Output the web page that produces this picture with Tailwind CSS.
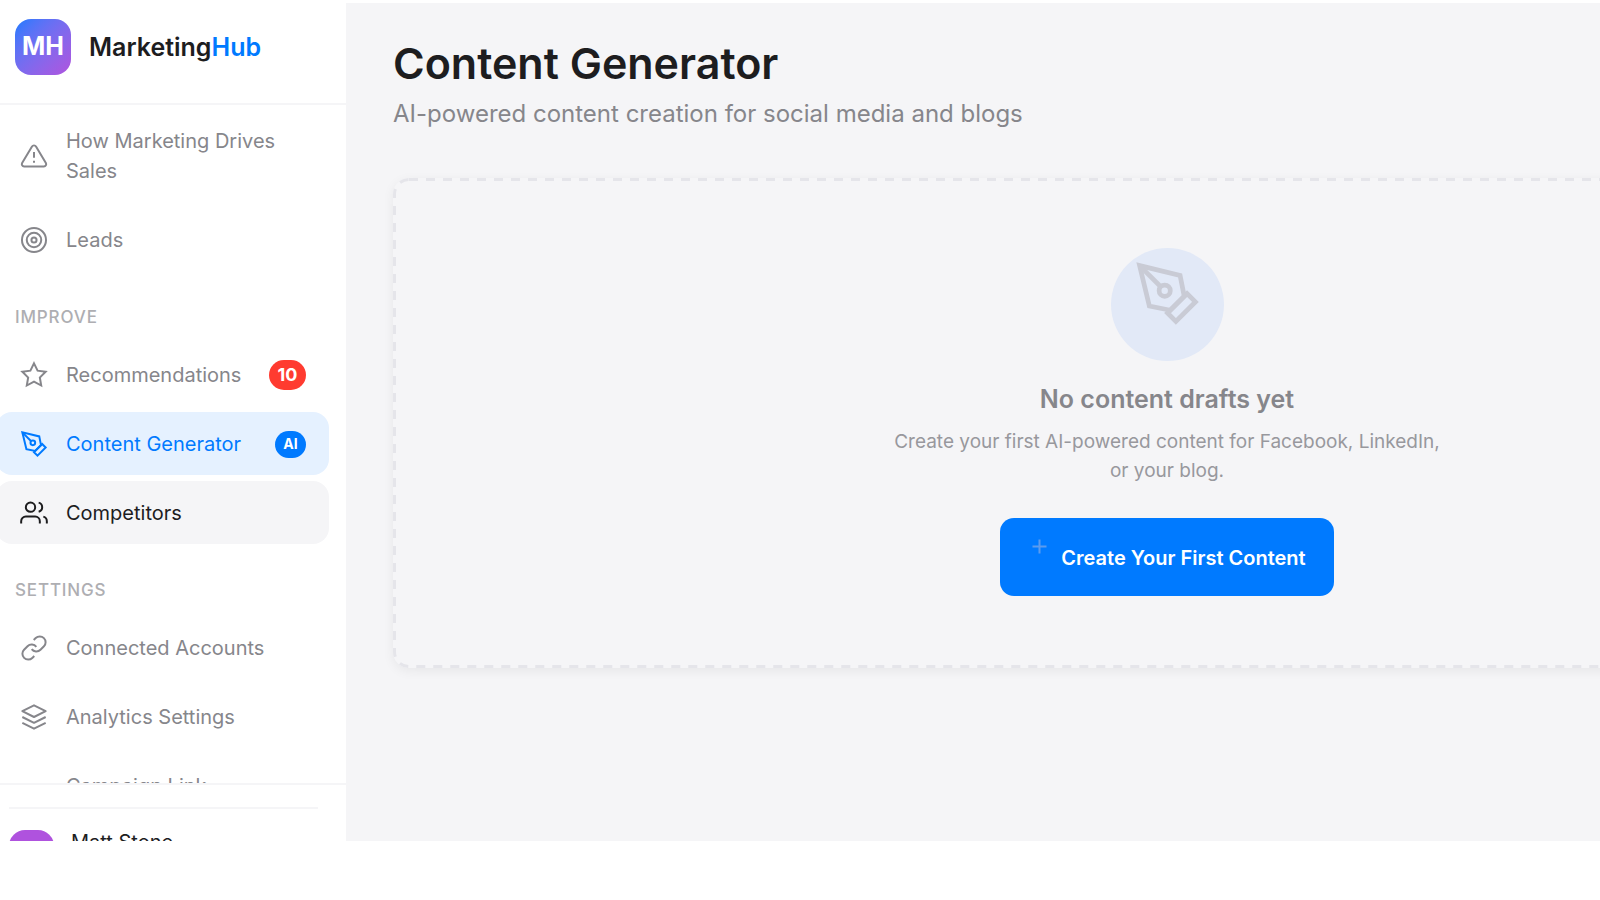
<!DOCTYPE html>
<html lang="en">
<head>
    <meta charset="UTF-8">
    <meta name="viewport" content="width=device-width, initial-scale=1.0">
    <title>MarketingHub - Content Generator</title>
    <script src="https://cdn.jsdelivr.net/npm/@tailwindcss/browser@4"></script>
</head>
<body class="bg-white font-['Inter',sans-serif] text-[#1d1d1f] antialiased overflow-hidden">

<div class="flex h-screen pt-[3px] pb-[59px]">

    <!-- Sidebar -->
    <aside class="flex w-[346px] shrink-0 flex-col overflow-hidden bg-white">

        <!-- Logo -->
        <div class="flex items-start gap-[18px] border-b-2 border-[#f5f5f7] px-[15px] pt-4 pb-7">
            <div class="flex size-14 items-center justify-center rounded-2xl bg-linear-to-br from-[#007aff] to-[#af52de] text-[25px] font-bold text-white">MH</div>
            <div class="text-[25px] leading-[56px] font-semibold">Marketing<span class="text-[#007aff]">Hub</span></div>
        </div>

        <!-- Navigation -->
        <nav class="-ml-1 min-h-0 flex-1 overflow-hidden pt-1 pr-[17px] text-[20px] leading-[30px] text-[#86868b]">
            <div class="flex flex-col gap-1.5">
                <a href="#" class="flex items-center gap-[18px] rounded-2xl pt-[17px] pb-4 pr-[23px] pl-6">
                    <svg class="size-7 shrink-0" viewBox="0 0 24 24" fill="none" stroke="currentColor" stroke-width="1.7"><path d="M10.29 3.86 1.82 18a2 2 0 0 0 1.71 3h16.94a2 2 0 0 0 1.71-3L13.71 3.86a2 2 0 0 0-3.42 0z"/><path d="M12 8.5v5M12 16v1.7"/></svg>
                    <span>How Marketing Drives Sales</span>
                </a>
                <a href="#" class="flex items-center gap-[18px] rounded-2xl pt-[17px] pb-4 pr-[23px] pl-6">
                    <svg class="size-7 shrink-0" viewBox="0 0 24 24" fill="none" stroke="currentColor" stroke-width="1.7"><circle cx="12" cy="12" r="10.3"/><circle cx="12" cy="12" r="6.2"/><circle cx="12" cy="12" r="2.2"/></svg>
                    <span>Leads</span>
                </a>
            </div>

            <h2 class="mt-[34px] mb-[14px] pl-[19px] text-[17px] leading-6 font-medium tracking-wider text-[#aeaeb2]">IMPROVE</h2>
            <div class="flex flex-col gap-1.5">
                <a href="#" class="flex items-center gap-[18px] rounded-2xl pt-[17px] pb-4 pr-[23px] pl-6">
                    <svg class="size-7 shrink-0" viewBox="0 0 24 24" fill="none" stroke="currentColor" stroke-width="1.7"><path d="m12 2 3.09 6.26L22 9.27l-5 4.87 1.18 6.88L12 17.77l-6.18 3.25L7 14.14 2 9.27l6.91-1.01z"/></svg>
                    <span class="flex-1">Recommendations</span>
                    <span class="flex h-[30px] w-[37px] items-center justify-center rounded-full bg-[#ff3b30] text-[18px] font-bold text-white">10</span>
                </a>
                <a href="#" class="flex items-center gap-[18px] rounded-2xl bg-[#e5f1ff] pt-[17px] pb-4 pr-[23px] pl-6 text-[#007aff]">
                    <svg class="size-7 shrink-0" viewBox="0 0 24 24" fill="none" stroke="currentColor" stroke-width="1.7"><path d="m12 19 7-7 3 3-7 7z"/><path d="m18 13-1.5-7.5L2 2l3.5 14.5L13 18z"/><path d="m2 2 7.59 7.59"/><circle cx="11" cy="11" r="2"/></svg>
                    <span class="flex-1">Content Generator</span>
                    <span class="flex h-[27px] w-[31px] items-center justify-center rounded-full bg-[#007aff] text-[14px] font-bold text-white">AI</span>
                </a>
                <a href="#" class="flex items-center gap-[18px] rounded-2xl bg-[#f5f5f7] pt-[17px] pb-4 pr-[23px] pl-6 text-[#1d1d1f]">
                    <svg class="size-7 shrink-0" viewBox="0 0 24 24" fill="none" stroke="currentColor" stroke-width="1.7"><path d="M17 21v-2a4 4 0 0 0-4-4H5a4 4 0 0 0-4 4v2"/><circle cx="9" cy="7" r="4"/><path d="M23 21v-2a4 4 0 0 0-3-3.87M16 3.13a4 4 0 0 1 0 7.75"/></svg>
                    <span>Competitors</span>
                </a>
            </div>

            <h2 class="mt-[34px] mb-[14px] pl-[19px] text-[17px] leading-6 font-medium tracking-wider text-[#aeaeb2]">SETTINGS</h2>
            <div class="flex flex-col gap-1.5">
                <a href="#" class="flex items-center gap-[18px] rounded-2xl pt-[17px] pb-4 pr-[23px] pl-6">
                    <svg class="size-7 shrink-0" viewBox="0 0 24 24" fill="none" stroke="currentColor" stroke-width="1.7"><path d="M10 13a5 5 0 0 0 7.54.54l3-3a5 5 0 0 0-7.07-7.07l-1.72 1.71"/><path d="M14 11a5 5 0 0 0-7.54-.54l-3 3a5 5 0 0 0 7.07 7.07l1.71-1.71"/></svg>
                    <span>Connected Accounts</span>
                </a>
                <a href="#" class="flex items-center gap-[18px] rounded-2xl pt-[17px] pb-4 pr-[23px] pl-6">
                    <svg class="size-7 shrink-0" viewBox="0 0 24 24" fill="none" stroke="currentColor" stroke-width="1.7" stroke-linejoin="round"><path d="M12 2 2 7l10 5 10-5z"/><path d="m2 17 10 5 10-5M2 12l10 5 10-5"/></svg>
                    <span>Analytics Settings</span>
                </a>
                <a href="#" class="flex rounded-2xl pt-[17px] pb-4 pr-[23px] pl-[70px]">Campaign Link</a>
            </div>
        </nav>

        <!-- User -->
        <div class="h-[58px] shrink-0 overflow-hidden border-t-2 border-[#f5f5f7] pt-[22px] pr-7 pl-[9px]">
            <div class="flex items-start gap-[17px] border-t-2 border-[#f5f5f7] pt-[21px]">
                <div class="size-[45px] shrink-0 rounded-2xl bg-[#af52de]"></div>
                <div class="text-[20px] leading-6">Matt Stone</div>
            </div>
        </div>
    </aside>

    <!-- Main content -->
    <main class="min-w-0 flex-1 overflow-hidden bg-[#f5f5f7] pt-8 pl-[47px]">
        <h1 class="text-[43px] leading-[56px] font-semibold">Content Generator</h1>
        <p class="mt-[5px] text-[24px] leading-9 text-[#86868b]">AI-powered content creation for social media and blogs</p>

        <!-- Empty state, runs past the right edge -->
        <section class="relative mt-[46px] -mr-[341px] flex flex-col items-center rounded-2xl bg-[#f5f5f7] pt-[70px] pb-[72px] text-center shadow-[0_3px_12px_rgba(0,0,0,0.06)]">
            <!-- Dashed outline with longer dashes than border-dashed gives -->
            <svg class="pointer-events-none absolute inset-0 size-full" fill="none" stroke="#e5e5ea" stroke-width="3" stroke-dasharray="9 8"><rect class="h-[calc(100%-3px)] w-[calc(100%-3px)]" x="1.5" y="1.5" rx="14.5"/></svg>

            <div class="size-[113px] rounded-full bg-[#e2e9f7] pt-3 pl-[23px]">
                <svg class="size-[67px] text-[#c9cbd5]" viewBox="0 0 24 24" fill="none" stroke="currentColor" stroke-width="1.7"><path d="m12 19 7-7 3 3-7 7z"/><path d="m18 13-1.5-7.5L2 2l3.5 14.5L13 18z"/><path d="m2 2 7.59 7.59"/><circle cx="11" cy="11" r="2"/></svg>
            </div>
            <h3 class="mt-5 text-[25px] leading-9 font-semibold text-[#86868b]">No content drafts yet</h3>
            <p class="mt-2.5 max-w-[564px] text-[19px] leading-[29px] text-[#98989d]">Create your first AI-powered content for Facebook, LinkedIn, or your blog.</p>
            <button type="button" class="mt-[33px] flex items-start gap-[14px] rounded-[14px] bg-[#007aff] pt-[21px] pr-7 pb-[19px] pl-8 text-[20px] leading-[38px] font-semibold text-white">
                <svg class="size-[15px] text-[#5c9bee]" viewBox="0 0 15 15" fill="none" stroke="currentColor" stroke-width="2"><path d="M7.5 0.5v14M0.5 7.5h14"/></svg>
                Create Your First Content
            </button>
        </section>
    </main>
</div>

</body>
</html>
